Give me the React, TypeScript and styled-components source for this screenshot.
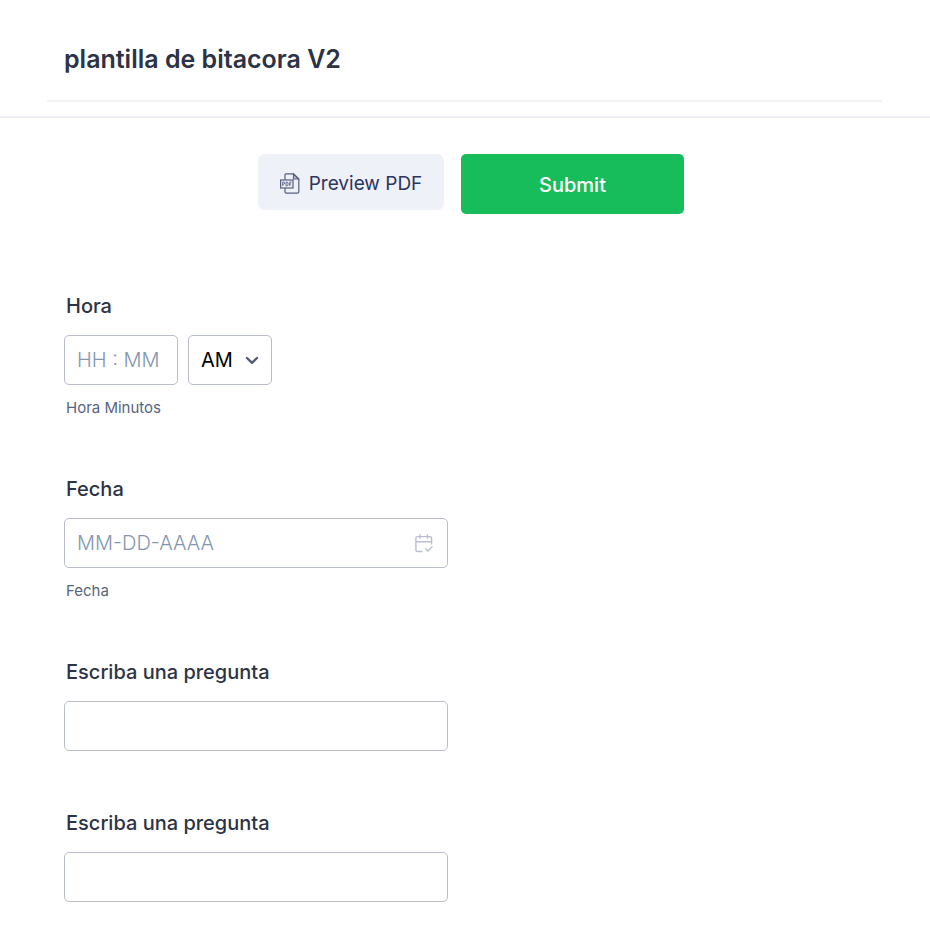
import React, { useState } from "react";
import styled, { createGlobalStyle } from "styled-components";

const GlobalStyle = createGlobalStyle`
  *, *::before, *::after { box-sizing: border-box; }
  body {
    margin: 0;
    background: #fff;
    color: #2c3345;
    font-family: Inter, "Liberation Sans", sans-serif;
  }
  button, input, select { font-family: inherit; }
`;

const Header = styled.header`
  padding: 38px 48px 14px 47px;
  border-bottom: 2px solid #eff0f6;
`;

const TitleBar = styled.div`
  padding: 0 17px 20px;
  border-bottom: 2px solid #f3f3f5;
`;

const Title = styled.h1`
  margin: 0;
  font-size: 25px;
  font-weight: 600;
  line-height: 42px;
`;

const Form = styled.form`
  padding: 36px 64px 30px;
`;

const Actions = styled.div`
  display: flex;
  justify-content: center;
  align-items: flex-start;
  gap: 17px;
  padding-left: 12px;
  margin-bottom: 80px;
`;

const Button = styled.button<{ $primary?: boolean }>`
  display: flex;
  align-items: center;
  justify-content: center;
  gap: 9px;
  padding: 2px 0 0;
  border: 0;
  cursor: pointer;
  width: ${(p) => (p.$primary ? 223 : 186)}px;
  height: ${(p) => (p.$primary ? 60 : 56)}px;
  border-radius: ${(p) => (p.$primary ? 5 : 7)}px;
  background: ${(p) => (p.$primary ? "#18bd5b" : "#eef1f8")};
  color: ${(p) => (p.$primary ? "#fff" : "#2b3462")};
  font-size: ${(p) => (p.$primary ? 20 : 19)}px;
  font-weight: ${(p) => (p.$primary ? 500 : 400)};
`;

const Fields = styled.div`
  display: flex;
  flex-direction: column;
  gap: 60px;
`;

const FieldBox = styled.div`
  max-width: 384px;
`;

const Label = styled.label`
  display: block;
  margin-bottom: 17px;
  padding-left: 2px;
  font-size: 20px;
  font-weight: 500;
  line-height: 24px;
`;

const Hint = styled.div`
  margin-top: 14px;
  padding-left: 2px;
  font-size: 15px;
  line-height: 18px;
  color: #57647e;
`;

const Controls = styled.div`
  display: flex;
  gap: 10px;
`;

const Control = styled.div<{ $width?: number }>`
  position: relative;
  width: ${(p) => (p.$width ? `${p.$width}px` : "100%")};
`;

const Input = styled.input`
  display: block;
  width: 100%;
  height: 50px;
  padding: 0 12px;
  border: 1px solid #b8bdc9;
  border-radius: 5px;
  background: #fff;
  color: #2c3345;
  font-size: 20px;
  &::placeholder { color: #8496b0; opacity: 1; font-weight: 300; }
`;

const Select = styled.select`
  display: block;
  appearance: none;
  width: 100%;
  height: 50px;
  padding: 0 12px;
  border: 1px solid #b8bdc9;
  border-radius: 5px;
  background: #fff;
  color: #000;
  font-size: 20px;
`;

const ControlIcon = styled.span<{ $right: number }>`
  position: absolute;
  top: 0;
  bottom: 0;
  right: ${(p) => p.$right}px;
  display: flex;
  align-items: center;
  pointer-events: none;
`;

const PdfIcon = () => (
  <svg width="20" height="21" viewBox="0 0 20 21" fill="none" stroke="#586080" strokeWidth="1.2" aria-hidden="true">
    <path d="M5 7V1.8Q5 .8 6 .8H13.5L18.8 6V18.8Q18.8 20.2 17.4 20.2H6.4Q5 20.2 5 18.8V15" />
    <path d="M13.5 .9V6H18.6Z" fill="#586080" fillOpacity=".35" />
    <rect x=".6" y="7" width="12.4" height="8" fill="#eef1f8" />
    <path d="M2.7 13V9H3.6Q4.6 9 4.6 10.1T3.6 11.2H2.7M6 9V13H6.7Q8.1 13 8.1 11T6.7 9ZM9.7 13V9H11.5M9.7 11H11.2" strokeWidth=".9" />
  </svg>
);

const ChevronIcon = () => (
  <svg width="14" height="9" viewBox="0 0 14 9" fill="none" stroke="#555b75" strokeWidth="2.4" strokeLinecap="round" strokeLinejoin="round" aria-hidden="true">
    <path d="M2 2 7 6.8 12 2" />
  </svg>
);

const CalendarIcon = () => (
  <svg width="18" height="19" viewBox="0 0 18 19" fill="none" stroke="#b9bed0" strokeWidth="1.4" aria-hidden="true">
    <path d="M7.5 17.5H2.5Q.9 17.5.9 15.9V4.2Q.9 2.6 2.5 2.6H15Q16.6 2.6 16.6 4.2V10.5" />
    <path d="M.9 7.7H16.6M5 .3V4.8M12.5 .3V4.8" />
    <path d="M10.3 14.3 12.8 16.9 17.4 12.4" />
  </svg>
);

interface FieldProps {
  id: string;
  label: string;
  hint?: string;
  children: React.ReactNode;
}

const Field = ({ id, label, hint, children }: FieldProps) => (
  <FieldBox>
    <Label htmlFor={id}>{label}</Label>
    <Controls>{children}</Controls>
    {hint && <Hint>{hint}</Hint>}
  </FieldBox>
);

export default function App() {
  const [period, setPeriod] = useState("AM");
  return (
    <>
      <GlobalStyle />
      <Header>
        <TitleBar>
          <Title>plantilla de bitacora V2</Title>
        </TitleBar>
      </Header>
      <Form onSubmit={(e) => e.preventDefault()}>
        <Actions>
          <Button type="button">
            <PdfIcon />
            Preview PDF
          </Button>
          <Button type="submit" $primary>
            Submit
          </Button>
        </Actions>
        <Fields>
          <Field id="hora" label="Hora" hint="Hora Minutos">
            <Control $width={114}>
              <Input id="hora" type="text" placeholder="HH : MM" />
            </Control>
            <Control $width={84}>
              <Select aria-label="AM / PM" value={period} onChange={(e) => setPeriod(e.target.value)}>
                <option>AM</option>
                <option>PM</option>
              </Select>
              <ControlIcon $right={13}>
                <ChevronIcon />
              </ControlIcon>
            </Control>
          </Field>
          <Field id="fecha" label="Fecha" hint="Fecha">
            <Control>
              <Input id="fecha" type="text" placeholder="MM-DD-AAAA" />
              <ControlIcon $right={15}>
                <CalendarIcon />
              </ControlIcon>
            </Control>
          </Field>
          <Field id="pregunta-1" label="Escriba una pregunta">
            <Control>
              <Input id="pregunta-1" type="text" />
            </Control>
          </Field>
          <Field id="pregunta-2" label="Escriba una pregunta">
            <Control>
              <Input id="pregunta-2" type="text" />
            </Control>
          </Field>
        </Fields>
      </Form>
    </>
  );
}
